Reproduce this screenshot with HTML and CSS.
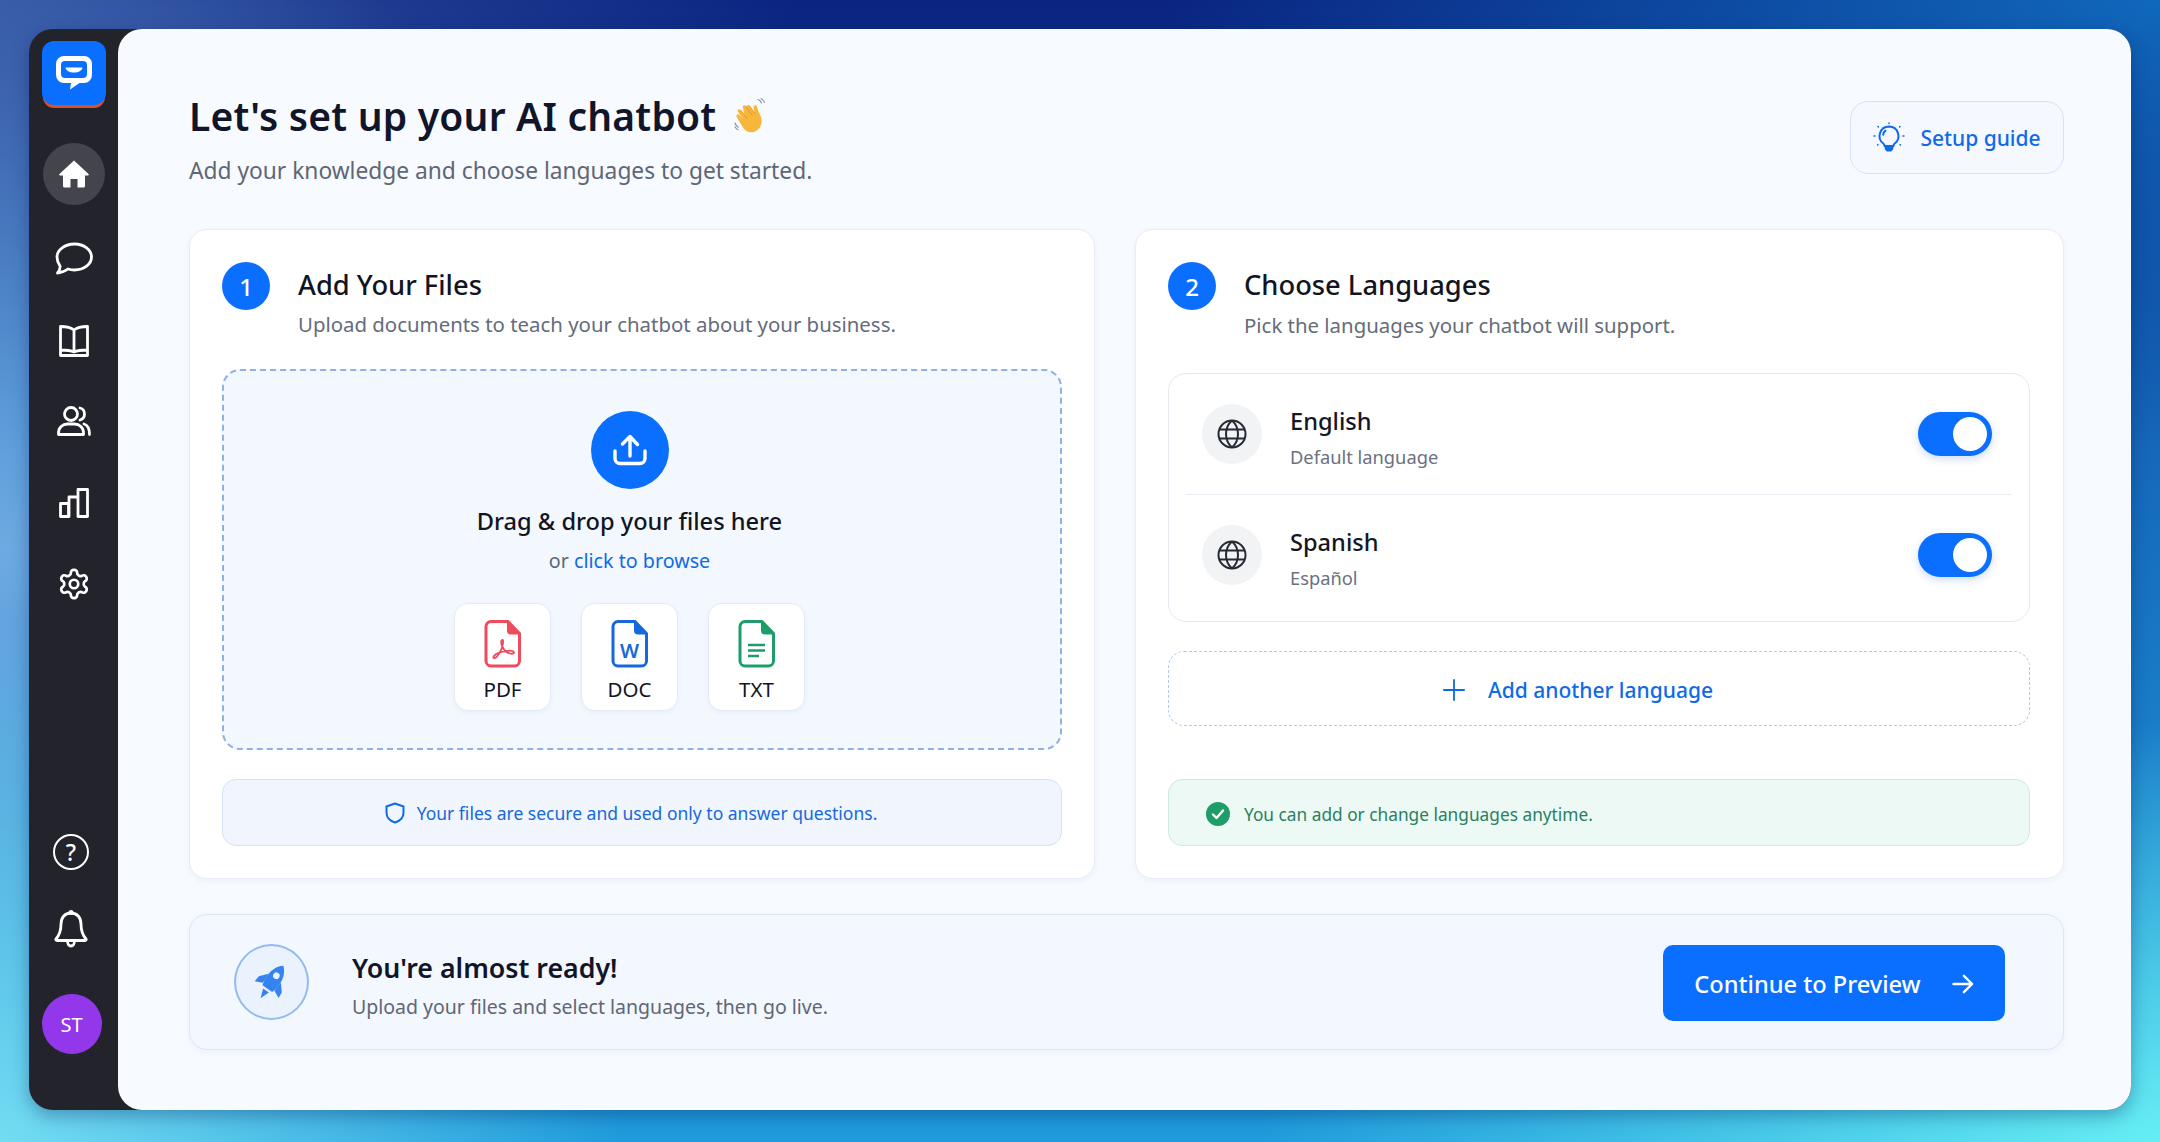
FILE: index.html
```html
<!DOCTYPE html>
<html lang="en">

<head>
    <meta charset="UTF-8">
    <title>Set up your AI chatbot</title>
    <link rel="stylesheet" href="styles.css">
</head>

<body>
    <div class="shell">
        <aside class="sidebar">
            <div class="logo">
                <svg class="logo-icon" viewBox="0 0 36 34">
                    <path fill="#fff" d="M8 0h20a8 8 0 0 1 8 8v11a8 8 0 0 1-8 8h-4.500l-9.500 6.500 1-6.500H8a8 8 0 0 1-8-8V8a8 8 0 0 1 8-8z" />
                    <rect x="5" y="5" width="26" height="17" rx="4" fill="#0a6fff" />
                    <path fill="#fff" d="M9.500 11.500h17c-.5 3.500-4 5-8.500 5s-8-1.500-8.500-5z" />
                </svg>
            </div>

            <nav class="nav">
                <a class="nav-item active">
                    <svg class="nav-icon" viewBox="0 0 30 30">
                        <path fill="#fff" d="M15 1.500 29.500 15c.6.6.2 1.500-.6 1.500H26V27a1.500 1.500 0 0 1-1.500 1.500H18.500V20h-7v8.500H5.500A1.500 1.500 0 0 1 4 27V16.500H1.100c-.8 0-1.200-.9-.6-1.500z" />
                    </svg>
                </a>
                <a class="nav-item">
                    <svg class="nav-icon chat" viewBox="0 0 38 34">
                        <path class="line" d="M19.500 2C29 2 36.500 7.800 36.500 15S29 28 19.500 28c-2.300 0-4.500-.3-6.500-1-2.500 2-6 3.500-10.500 4 1.500-1.800 2.500-4 2.700-6.500C3.500 22 2 18.700 2 15 2 7.800 10 2 19.500 2z" />
                    </svg>
                </a>
                <a class="nav-item">
                    <svg class="nav-icon book" viewBox="0 0 30 32">
                        <path class="line" d="M15 5C12 2.500 7 1.500 1.500 1.500v23.500C7 25 12 25.500 15 27c3-1.500 8-2 13.500-2V1.500C23 1.500 18 2.500 15 5zM15 5v22M1.500 25v5.500h27V25" />
                    </svg>
                </a>
                <a class="nav-item">
                    <svg class="nav-icon users" viewBox="0 0 34 30">
                        <circle class="line" cx="14" cy="8" r="6.500" />
                        <path class="line" d="M1.500 28.500v-1.500c0-5.500 4-9 9-9h7c5 0 9 3.500 9 9v1.500zM23 2c3 .7 4.500 3 4.500 6s-1.500 5-4.500 6M27 18c3.500 1 5.500 4.500 5.500 10.500" />
                    </svg>
                </a>
                <a class="nav-item">
                    <svg class="nav-icon" viewBox="0 0 30 30">
                        <path class="line" d="M1.500 15.500h8v13h-8zM10 28.500V9h9v19.500M19 28.500V1.500h9.500v27z" />
                    </svg>
                </a>
                <a class="nav-item">
                    <svg class="nav-icon gear" viewBox="0 0 24 24">
                        <path class="line" d="M12.220 2h-.44a2 2 0 0 0-2 2v.18a2 2 0 0 1-1 1.730l-.43.250a2 2 0 0 1-2 0l-.15-.08a2 2 0 0 0-2.730.730l-.22.380a2 2 0 0 0 .73 2.730l.15.100a2 2 0 0 1 1 1.720v.510a2 2 0 0 1-1 1.740l-.15.090a2 2 0 0 0-.73 2.730l.22.380a2 2 0 0 0 2.730.730l.15-.08a2 2 0 0 1 2 0l.43.250a2 2 0 0 1 1 1.730V20a2 2 0 0 0 2 2h.44a2 2 0 0 0 2-2v-.18a2 2 0 0 1 1-1.730l.43-.25a2 2 0 0 1 2 0l.15.080a2 2 0 0 0 2.730-.730l.22-.39a2 2 0 0 0-.73-2.730l-.15-.08a2 2 0 0 1-1-1.740v-.5a2 2 0 0 1 1-1.740l.15-.09a2 2 0 0 0 .73-2.730l-.22-.38a2 2 0 0 0-2.730-.73l-.15.080a2 2 0 0 1-2 0l-.43-.25a2 2 0 0 1-1-1.730V4a2 2 0 0 0-2-2z" />
                        <circle class="line" cx="12" cy="12" r="3" />
                    </svg>
                </a>
            </nav>

            <div class="side-bottom">
                <span class="help">?</span>
                <svg class="bell" viewBox="0 0 34 38">
                    <path class="line" d="M17 3c6.500 0 10 5 10 11 0 7 1.500 11 5 15 .5.8 0 1.500-1 1.500H3c-1 0-1.500-.7-1-1.500 3.500-4 5-8 5-15C7 8 10.500 3 17 3zM13.500 31c0 3 1.500 5 3.500 5s3.500-2 3.500-5" />
                    <circle cx="17" cy="2.500" r="2.500" fill="#fff" />
                </svg>
                <div class="avatar">ST</div>
            </div>
        </aside>

        <main class="main">
            <header class="page-head">
                <div>
                    <h1>Let's set up your AI chatbot
                        <svg class="wave" viewBox="0 0 34 36">
                            <path fill="#f6b73c" d="M9 9.500c-1-1.800 1.300-3.200 2.500-1.700l1.300 1.800c-.9-2 1.400-3.600 2.700-1.900l5 7.200-1-5.500c-.3-2.200 2.700-3 3.500-.9.200 2 2.500 6.500 4 10.500 2.300 6-1 13.500-7.500 15-5 1.200-8-1-10.500-4.500L2.700 19c-1.300-1.900 1.200-3.700 2.700-2l3.500 4-5-7.200C2.700 11.800 5.400 10.300 6.700 12l3.800 5.500z" />
                            <path fill="none" stroke="#e39b25" stroke-width="1" d="M15.500 7.700 21 16M11.500 7.800l7 10M6.700 12l6.500 9" />
                            <path fill="none" stroke="#8b93a3" stroke-width="1.200" stroke-linecap="round" d="M24 1.500c1.500.5 3 1.800 3.500 3.500M27 .8c1.500.7 2.800 2 3.400 3.600M1 25c.6 2 1.600 3.300 3.300 4.200M1 29c.8 1.300 1.800 2.200 3 2.700" />
                        </svg>
                    </h1>
                    <p class="page-sub">Add your knowledge and choose languages to get started.</p>
                </div>
                <a class="guide-btn">
                    <svg class="bulb" viewBox="0 0 32 32">
                        <path class="blue-line" d="M16 4.500a9.500 9.500 0 0 0-5.500 17.200c.8.600 1 1.300 1 2.300h9c0-1 .2-1.700 1-2.300A9.500 9.500 0 0 0 16 4.500zM12.500 8.700c-1.500 1-2.300 2.500-2.300 4" />
                        <path fill="#0f6ae8" d="M11.500 25h9c0 2-1 3.500-2.500 4.500h-4c-1.500-1-2.500-2.500-2.500-4.500z" />
                        <path class="blue-dots" d="M16 1v.5M5 4.500l.4.400M27 4.500l-.4.400M1 14h1M30 14h1M4.500 23l.5-.4M27.500 23l-.5-.4" />
                    </svg>
                    Setup guide
                </a>
            </header>

            <section class="cards">
                <div class="card">
                    <div class="card-head">
                        <span class="step">1</span>
                        <div>
                            <h2>Add Your Files</h2>
                            <p class="card-sub">Upload documents to teach your chatbot about your business.</p>
                        </div>
                    </div>

                    <div class="dropzone">
                        <div class="upload-circle">
                            <svg class="upload-icon" viewBox="0 0 34 34">
                                <path class="white-line" d="M17 23V4M9.500 11 17 3.500l7.500 8M2 18v7.500a5 5 0 0 0 5 5h20a5 5 0 0 0 5-5V18" />
                            </svg>
                        </div>
                        <div class="drop-title">Drag &amp; drop your files here</div>
                        <div class="drop-sub">or <span class="link">click to browse</span></div>
                        <div class="file-types">
                            <div class="file-tile">
                                <svg class="file-icon pdf" viewBox="0 0 37 48">
                                    <path class="file-outline" d="M7 1.500h17L35.500 13.500V41a5 5 0 0 1-5 5H7a5 5 0 0 1-5-5V6.500a5 5 0 0 1 5-5z" />
                                    <path class="file-corner" d="M23 1.500h1L35.500 13.500v1H27a4 4 0 0 1-4-4z" />
                                    <path class="glyph" d="M18.500 20c-2 0-1.500 4 0 7 1.500 3 4 5.500 7.500 6.500 3 .8 5-.5 3.500-1.800-2-1.500-8.500-.8-14.500 1-4.500 1.500-7 5-5 5.500 2 .5 5-4 7-8 1.500-3 3-10.500 1.500-10.200z" />
                                </svg>
                                <span>PDF</span>
                            </div>
                            <div class="file-tile">
                                <svg class="file-icon doc" viewBox="0 0 37 48">
                                    <path class="file-outline" d="M7 1.500h17L35.500 13.500V41a5 5 0 0 1-5 5H7a5 5 0 0 1-5-5V6.500a5 5 0 0 1 5-5z" />
                                    <path class="file-corner" d="M23 1.500h1L35.500 13.500v1H27a4 4 0 0 1-4-4z" />
                                    <text class="file-letter" x="18.500" y="38" text-anchor="middle">W</text>
                                </svg>
                                <span>DOC</span>
                            </div>
                            <div class="file-tile">
                                <svg class="file-icon txt" viewBox="0 0 37 48">
                                    <path class="file-outline" d="M7 1.500h17L35.500 13.500V41a5 5 0 0 1-5 5H7a5 5 0 0 1-5-5V6.500a5 5 0 0 1 5-5z" />
                                    <path class="file-corner" d="M23 1.500h1L35.500 13.500v1H27a4 4 0 0 1-4-4z" />
                                    <path class="text-lines" d="M10 25h17M10 30.500h17M10 36h11" />
                                </svg>
                                <span>TXT</span>
                            </div>
                        </div>
                    </div>

                    <div class="note note-blue">
                        <svg class="shield" viewBox="0 0 20 22">
                            <path class="blue-line" d="M10 1.500 18.500 4.500v6c0 5-3.500 8.500-8.500 10-5-1.500-8.500-5-8.500-10v-6z" />
                        </svg>
                        Your files are secure and used only to answer questions.
                    </div>
                </div>

                <div class="card">
                    <div class="card-head">
                        <span class="step">2</span>
                        <div>
                            <h2>Choose Languages</h2>
                            <p class="card-sub lang-sub">Pick the languages your chatbot will support.</p>
                        </div>
                    </div>

                    <div class="lang-list">
                        <div class="lang-row">
                            <span class="globe-wrap">
                                <svg class="globe" viewBox="0 0 30 30">
                                    <circle class="dark-line" cx="15" cy="15" r="13.500" />
                                    <path class="dark-line" d="M15 1.500c-8 7-8 20 0 27M15 1.500c8 7 8 20 0 27M2.500 10.500h25M2.500 19.500h25" />
                                </svg>
                            </span>
                            <div class="lang-text">
                                <div class="lang-name">English</div>
                                <div class="lang-note">Default language</div>
                            </div>
                            <span class="toggle"><span class="knob"></span></span>
                        </div>
                        <div class="lang-row">
                            <span class="globe-wrap">
                                <svg class="globe" viewBox="0 0 30 30">
                                    <circle class="dark-line" cx="15" cy="15" r="13.500" />
                                    <path class="dark-line" d="M15 1.500c-8 7-8 20 0 27M15 1.500c8 7 8 20 0 27M2.500 10.500h25M2.500 19.500h25" />
                                </svg>
                            </span>
                            <div class="lang-text">
                                <div class="lang-name">Spanish</div>
                                <div class="lang-note">Español</div>
                            </div>
                            <span class="toggle"><span class="knob"></span></span>
                        </div>
                    </div>

                    <a class="add-lang">
                        <svg class="plus" viewBox="0 0 24 24">
                            <path class="blue-line" d="M12 1v22M1 12h22" />
                        </svg>
                        Add another language
                    </a>

                    <div class="note note-green">
                        <svg class="check" viewBox="0 0 24 24">
                            <circle cx="12" cy="12" r="12" fill="#1f9d68" />
                            <path d="M7 12.500l3.500 3.500L17 8.500" fill="none" stroke="#fff" stroke-width="2.400" stroke-linecap="round" stroke-linejoin="round" />
                        </svg>
                        You can add or change languages anytime.
                    </div>
                </div>
            </section>

            <section class="banner">
                <span class="rocket-wrap">
                    <svg class="rocket" viewBox="0 0 32 36">
                        <g transform="rotate(35 16 18)">
                            <path fill="#3583f0" d="M16 1c5 4 6.500 10 6.500 15 0 3-.5 6-1.500 9H11c-1-3-1.500-6-1.500-9C9.500 11 11 5 16 1z" />
                            <path fill="#3583f0" d="M9.500 14 4 20.500 3.500 26l6.500-3zM22.500 14l5.500 6.500.5 5.500-6.500-3z" />
                            <path fill="#3583f0" d="M13 27h6l-3 8z" />
                            <circle cx="16" cy="11.500" r="2.800" fill="#eaf2fd" />
                        </g>
                    </svg>
                </span>
                <div class="banner-text">
                    <h3>You're almost ready!</h3>
                    <p>Upload your files and select languages, then go live.</p>
                </div>
                <a class="continue-btn">
                    Continue to Preview
                    <svg class="arrow" viewBox="0 0 24 22">
                        <path class="white-thin" d="M1.500 11h20M13 2l9 9-9 9" />
                    </svg>
                </a>
            </section>
        </main>
    </div>
</body>

</html>
```

FILE: styles.css
```css
* {
    box-sizing: border-box;
}

html,
body {
    height: 100%;
    margin: 0;
    overflow: hidden;
}

body {
    padding: 29px 29px 32px 29px;
    font-family: "Noto Sans", sans-serif;
    color: #14182b;
    background:
        radial-gradient(ellipse 900px 420px at 100% 100%, #66eef4, rgba(102, 238, 244, 0)),
        radial-gradient(ellipse 620px 520px at 0% 100%, #72dcf2, rgba(114, 220, 242, 0)),
        radial-gradient(ellipse 700px 650px at 0% 48%, rgba(125, 180, 232, 0.85), rgba(125, 180, 232, 0)),
        radial-gradient(ellipse 800px 420px at 0% 0%, #2f4f9f, rgba(47, 79, 159, 0)),
        radial-gradient(ellipse 1000px 420px at 100% 0%, #1068bc, rgba(16, 104, 188, 0)),
        linear-gradient(180deg, #0a2480 0%, #1569bb 40%, #209cdc 100%);
}

h1,
h2,
h3,
p {
    margin: 0;
}

svg {
    display: block;
    flex-shrink: 0;
}

.line {
    fill: none;
    stroke: #fff;
    stroke-width: 2.800;
    stroke-linejoin: round;
    stroke-linecap: round;
}

.gear .line {
    stroke-width: 1.900;
}

.blue-line {
    fill: none;
    stroke: #0f6ae8;
    stroke-width: 2;
    stroke-linecap: round;
    stroke-linejoin: round;
}

.blue-dots {
    fill: none;
    stroke: #0f6ae8;
    stroke-width: 1.500;
    stroke-linecap: round;
}

.white-line {
    fill: none;
    stroke: #fff;
    stroke-width: 3.400;
    stroke-linecap: round;
    stroke-linejoin: round;
}

.white-thin {
    fill: none;
    stroke: #fff;
    stroke-width: 2.600;
    stroke-linecap: round;
    stroke-linejoin: round;
}

.dark-line {
    fill: none;
    stroke: #262a35;
    stroke-width: 2;
}

.shell {
    display: flex;
    height: 100%;
    background-color: #22232b;
    border-radius: 24px;
    box-shadow: 0 6px 18px rgba(0, 30, 90, 0.35);
}

/* sidebar */
.sidebar {
    width: 89px;
    flex-shrink: 0;
    display: flex;
    flex-direction: column;
    align-items: center;
    padding: 12px 0 56px;
}

.logo {
    width: 64px;
    height: 64px;
    margin-bottom: 38px;
    display: flex;
    align-items: center;
    justify-content: center;
    background-color: #0a6fff;
    border-radius: 12px;
    box-shadow: 0 4px 0 -1px #d9512c;
}

.logo-icon {
    width: 36px;
    height: 34px;
}

.nav {
    display: flex;
    flex-direction: column;
    gap: 20px;
}

.nav-item {
    width: 62px;
    height: 62px;
    display: flex;
    align-items: center;
    justify-content: center;
    border-radius: 50%;
}

.nav-item:nth-child(2) {
    margin-top: 3px;
}

.nav-item:nth-child(4) {
    margin-top: -2px;
}

.nav-item:nth-child(6) {
    margin-top: -1px;
}

.nav-item.active {
    background-color: #44454c;
}

.nav-icon {
    width: 30px;
    height: 30px;
}

.nav-icon.chat {
    width: 38px;
    height: 34px;
}

.nav-icon.book {
    height: 32px;
}

.nav-icon.users {
    width: 34px;
}

.nav-icon.gear {
    width: 34px;
    height: 34px;
}

.side-bottom {
    margin-top: auto;
    display: flex;
    flex-direction: column;
    align-items: center;
    padding-right: 5px;
}

.help {
    width: 36px;
    height: 36px;
    display: flex;
    align-items: center;
    justify-content: center;
    color: #fff;
    font-size: 23px;
    font-weight: 500;
    border: 2.500px solid #fff;
    border-radius: 50%;
}

.bell {
    width: 34px;
    height: 38px;
    margin-top: 40px;
}

.avatar {
    width: 60px;
    height: 60px;
    margin-top: 46px;
    margin-left: 1px;
    display: flex;
    align-items: center;
    justify-content: center;
    color: #fff;
    font-size: 20px;
    background-color: #9238ea;
    border-radius: 50%;
}

/* main panel */
.main {
    flex: 1;
    min-width: 0;
    display: flex;
    flex-direction: column;
    padding: 59px 67px 60px 71px;
    background-color: #f7faff;
    border-radius: 24px;
}

.page-head {
    display: flex;
    justify-content: space-between;
    align-items: flex-start;
    margin-bottom: 42px;
}

h1 {
    display: flex;
    align-items: center;
    gap: 18px;
    font-size: 39px;
    line-height: 56px;
    font-weight: 600;
    letter-spacing: 0.2px;
    color: #11152a;
}

.wave {
    width: 34px;
    height: 36px;
}

.page-sub {
    margin-top: 11px;
    font-size: 22.750px;
    line-height: 32px;
    color: #5f6675;
}

.guide-btn {
    margin-top: 13px;
    width: 214px;
    height: 73px;
    display: flex;
    align-items: center;
    justify-content: center;
    gap: 15px;
    color: #0f6ae8;
    font-size: 21px;
    font-weight: 500;
    background-color: #f5f9ff;
    border: 1px solid #d5e2f8;
    border-radius: 18px;
}

.bulb {
    width: 32px;
    height: 32px;
}

/* cards */
.cards {
    flex: 1;
    min-height: 0;
    display: grid;
    grid-template-columns: 906px 1fr;
    gap: 40px;
}

.card {
    display: flex;
    flex-direction: column;
    padding: 32px;
    background-color: #fff;
    border: 1px solid #e8edf5;
    border-radius: 18px;
    box-shadow: 0 2px 6px rgba(40, 70, 130, 0.05);
}

.card + .card {
    padding-right: 33px;
}

.card-head {
    display: flex;
    gap: 28px;
}

.step {
    width: 48px;
    height: 48px;
    display: flex;
    align-items: center;
    justify-content: center;
    flex-shrink: 0;
    color: #fff;
    font-size: 24px;
    font-weight: 500;
    background-color: #0a6fff;
    border-radius: 50%;
}

h2 {
    margin-top: 5px;
    font-size: 27.300px;
    line-height: 36px;
    font-weight: 500;
    color: #12151f;
}

.card-sub {
    margin-top: 7px;
    font-size: 20.400px;
    line-height: 28px;
    color: #656c7a;
}

.lang-sub {
    margin-top: 8px;
}

.dropzone {
    height: 381px;
    margin-top: 31px;
    padding: 40px 25px 0 0;
    display: flex;
    flex-direction: column;
    align-items: center;
    background-color: #f3f8ff;
    border: 2px dashed #8fb2e4;
    border-radius: 18px;
}

.upload-circle {
    width: 78px;
    height: 78px;
    display: flex;
    align-items: center;
    justify-content: center;
    background-color: #0a6fff;
    border-radius: 50%;
}

.upload-icon {
    width: 34px;
    height: 34px;
}

.drop-title {
    margin-top: 14px;
    font-size: 23.600px;
    line-height: 36px;
    font-weight: 500;
    color: #12151f;
}

.drop-sub {
    margin-top: 8px;
    font-size: 19.700px;
    line-height: 28px;
    color: #5f6675;
}

.link {
    color: #0f6ae8;
}

.file-types {
    display: flex;
    gap: 30px;
    margin-top: 28px;
}

.file-tile {
    width: 97px;
    height: 108px;
    padding-top: 16px;
    display: flex;
    flex-direction: column;
    align-items: center;
    font-size: 20.500px;
    line-height: 30px;
    color: #12151f;
    background-color: #fff;
    border: 1px solid #e6ebf3;
    border-radius: 14px;
    box-shadow: 0 2px 5px rgba(40, 70, 130, 0.05);
}

.file-icon {
    width: 37px;
    height: 48px;
    margin-bottom: 6px;
}

.file-outline {
    fill: #fff;
    stroke-width: 3;
    stroke-linejoin: round;
}

.pdf .file-outline {
    stroke: #ef4b5f;
}

.pdf .file-corner {
    fill: #ef4b5f;
}

.glyph {
    fill: none;
    stroke: #ef4b5f;
    stroke-width: 1.800;
    stroke-linejoin: round;
}

.doc .file-outline {
    stroke: #1668dc;
}

.doc .file-corner {
    fill: #1668dc;
}

.file-letter {
    font-family: "Noto Sans", sans-serif;
    font-size: 20px;
    font-weight: 600;
    fill: #1668dc;
}

.txt .file-outline {
    stroke: #1f9d68;
}

.txt .file-corner {
    fill: #1f9d68;
}

.text-lines {
    fill: none;
    stroke: #1f9d68;
    stroke-width: 2.400;
}

.note {
    height: 67px;
    margin-top: auto;
    display: flex;
    align-items: center;
    font-size: 17.500px;
    border-radius: 14px;
}

.note-blue {
    justify-content: center;
    gap: 12px;
    padding-right: 22px;
    color: #1668dc;
    background-color: #f1f6fe;
    border: 1px solid #d5e2f8;
}

.note-green {
    gap: 14px;
    padding: 3px 0 0 37px;
    font-size: 17.300px;
    color: #2a7f62;
    background-color: #edf9f4;
    border: 1px solid #cfeadf;
}

.shield {
    width: 20px;
    height: 22px;
}

.check {
    width: 24px;
    height: 24px;
}

/* languages */
.lang-list {
    height: 249px;
    margin-top: 34px;
    padding: 0 17px;
    border: 1px solid #e4e8ef;
    border-radius: 18px;
}

.lang-row {
    height: 120px;
    padding: 0 20px 0 16px;
    display: flex;
    align-items: center;
}

.lang-row + .lang-row {
    height: 121px;
    border-top: 1px solid #e9ecf2;
}

.globe-wrap {
    width: 60px;
    height: 60px;
    display: flex;
    align-items: center;
    justify-content: center;
    background-color: #f2f3f5;
    border-radius: 50%;
}

.globe {
    width: 30px;
    height: 30px;
}

.lang-text {
    flex: 1;
    margin-left: 28px;
    padding-top: 6px;
}

.lang-name {
    font-size: 23.600px;
    line-height: 34px;
    font-weight: 500;
    color: #14171f;
}

.lang-note {
    margin-top: 6px;
    font-size: 18.300px;
    line-height: 26px;
    color: #6a7180;
}

.toggle {
    width: 74px;
    height: 44px;
    padding: 5px;
    display: flex;
    justify-content: flex-end;
    background-color: #0a6fff;
    border-radius: 22px;
    box-shadow: 0 3px 8px rgba(10, 80, 200, 0.2);
}

.knob {
    width: 34px;
    height: 34px;
    background-color: #fff;
    border-radius: 50%;
}

.add-lang {
    height: 75px;
    margin-top: 29px;
    padding: 2px 42px 0 0;
    display: flex;
    align-items: center;
    justify-content: center;
    gap: 23px;
    color: #0f6ae8;
    font-size: 21px;
    font-weight: 500;
    border: 1.500px dashed #b3c8ee;
    border-radius: 16px;
}

.plus {
    width: 22px;
    height: 22px;
}

/* bottom banner */
.banner {
    height: 136px;
    margin-top: 35px;
    padding: 0 59px 0 44px;
    display: flex;
    align-items: center;
    background-color: #f3f7fe;
    border: 1.500px solid #dbe6f8;
    border-radius: 18px;
    box-shadow: 0 2px 6px rgba(40, 70, 130, 0.05);
}

.rocket-wrap {
    width: 75px;
    height: 76px;
    display: flex;
    align-items: center;
    justify-content: center;
    background-color: #eaf2fd;
    border: 2px solid #93bbef;
    border-radius: 50%;
}

.rocket {
    width: 38px;
    height: 42px;
}

.banner-text {
    flex: 1;
    margin-left: 43px;
    padding-top: 7px;
}

h3 {
    font-size: 26.750px;
    line-height: 36px;
    font-weight: 600;
    color: #11152a;
}

.banner-text p {
    margin-top: 7px;
    font-size: 19.500px;
    line-height: 28px;
    color: #5f6675;
}

.continue-btn {
    width: 342px;
    height: 76px;
    margin: 2px -1px 0 0;
    padding-top: 2px;
    display: flex;
    align-items: center;
    justify-content: center;
    gap: 31px;
    color: #fff;
    font-size: 23.600px;
    font-weight: 500;
    background-color: #0a6fff;
    border-radius: 10px;
}

.arrow {
    width: 22px;
    height: 20px;
}
```
